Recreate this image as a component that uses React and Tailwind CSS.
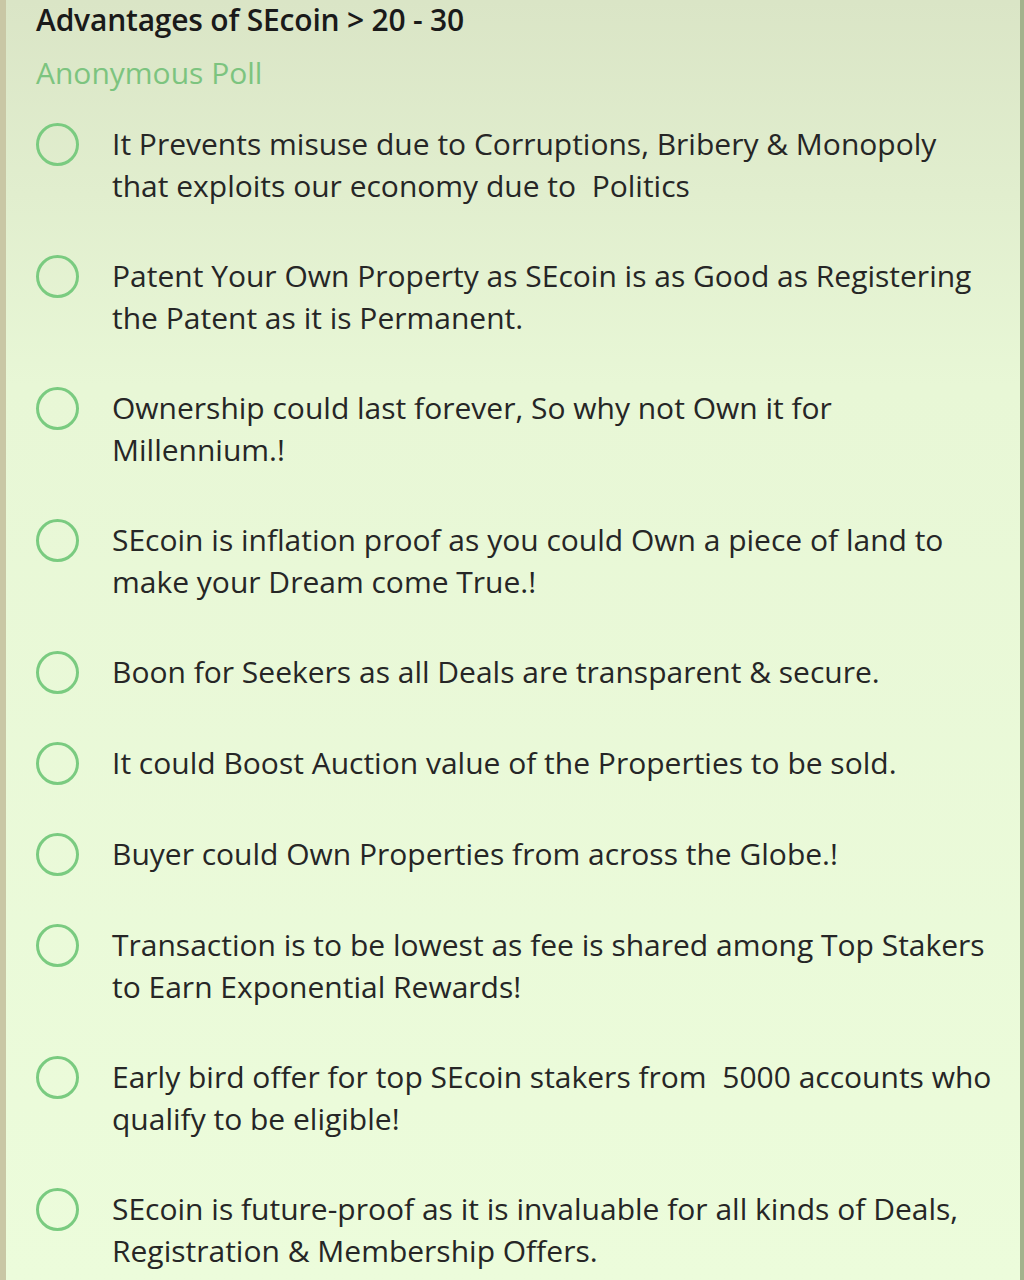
const options = [
  ['It Prevents misuse due to Corruptions, Bribery & Monopoly', 'that exploits our economy due to  Politics'],
  ['Patent Your Own Property as SEcoin is as Good as Registering', 'the Patent as it is Permanent.'],
  ['Ownership could last forever, So why not Own it for', 'Millennium.!'],
  ['SEcoin is inflation proof as you could Own a piece of land to', 'make your Dream come True.!'],
  ['Boon for Seekers as all Deals are transparent & secure.'],
  ['It could Boost Auction value of the Properties to be sold.'],
  ['Buyer could Own Properties from across the Globe.!'],
  ['Transaction is to be lowest as fee is shared among Top Stakers', 'to Earn Exponential Rewards!'],
  ['Early bird offer for top SEcoin stakers from  5000 accounts who', 'qualify to be eligible!'],
  ['SEcoin is future-proof as it is invaluable for all kinds of Deals,', 'Registration & Membership Offers.'],
]

function Radio() {
  return (
    <div className="w-[43px] h-[43px] shrink-0 rounded-full border-[3.5px] border-[#7acb80]" />
  )
}

export default function App() {
  return (
    <div
      className="w-[1024px] h-[1280px] overflow-hidden border-l-[6px] border-l-[#c9c7a5] border-r-[4px] border-r-[#a3b28d] bg-gradient-to-b from-[#dae5c6] via-[#e8f7d6] via-30% to-[#ecfcdb] pl-[30px] text-[#262626]"
      style={{ fontFamily: '"Open Sans", "Noto Sans", sans-serif' }}
    >
      <h1 className="text-[30px] leading-[40px] font-semibold tracking-[-0.2px] text-[#1a1a1a]">
        Advantages of SEcoin &gt; 20 - 30
      </h1>
      <p className="mt-[13px] text-[30px] leading-[40px] text-[#7cc47f]">Anonymous Poll</p>

      <div className="mt-[30px] flex flex-col gap-[48px]">
        {options.map((lines, i) => (
          <div key={i} className="flex items-start gap-[33px]">
            <Radio />
            <div className="text-[30px] leading-[42px] whitespace-pre">
              {lines.map((l, j) => (
                <div key={j}>{l}</div>
              ))}
            </div>
          </div>
        ))}
      </div>
    </div>
  )
}
